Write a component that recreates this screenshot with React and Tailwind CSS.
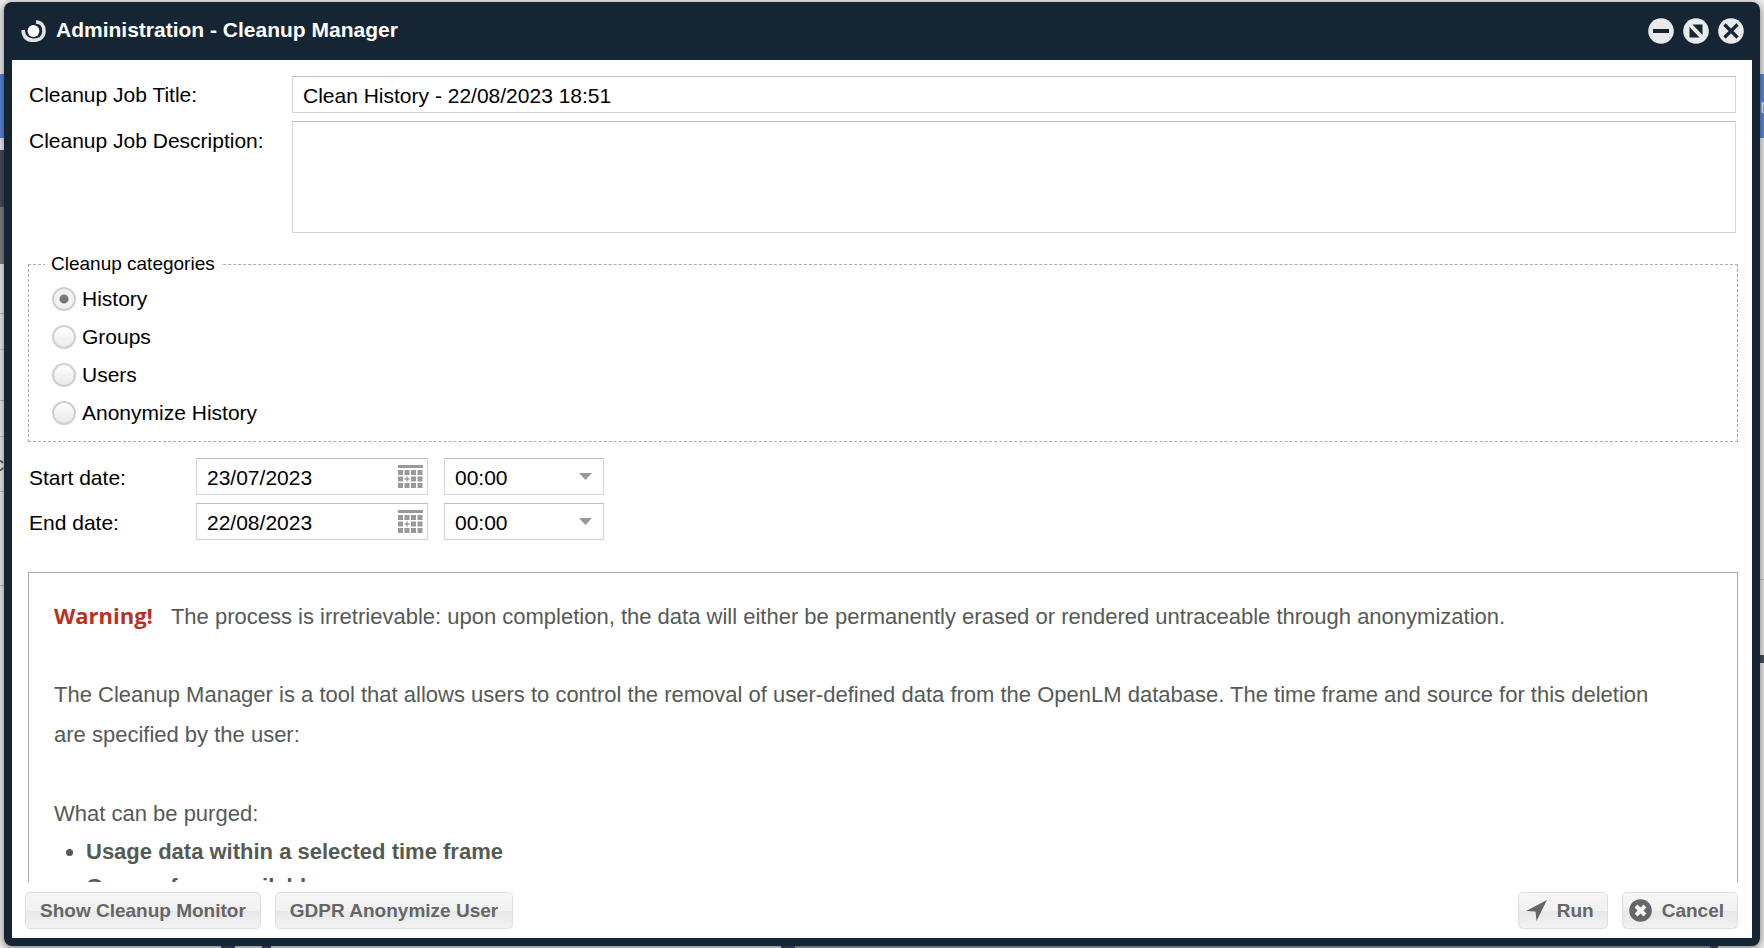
import { useState } from "react";

const categories = ["History", "Groups", "Users", "Anonymize History"];

const buttonStyle =
  "flex h-[37px] items-center rounded-[5px] border border-[#dedede] bg-[linear-gradient(#f6f6f6,#f1f1f1_50%,#e8e8e8_52%,#f2f2f2)] text-[19px] font-bold text-[#666]";

const fieldStyle =
  "border border-[#d5d5d5] border-t-[#bdbdbd] bg-white px-[10px] pt-[2px] text-[21px] leading-6 text-black outline-none";

function Backdrop() {
  return (
    <div
      className="absolute inset-0 flex flex-col justify-between overflow-hidden bg-[#ececec]"
      aria-hidden="true"
    >
      <div className="flex justify-between">
        <div className="w-2 pt-[74px]">
          <div className="h-16 bg-[#5b84dc]" />
          <div className="mt-3 h-[57px] bg-[#454c5a]" />
          <div className="h-[57px] bg-[#7d7f84]" />
          <div className="h-[50px] border-b border-[#bbb]" />
          <div className="h-9 border-b border-[#ccc]" />
          <div className="h-[51px] border-b border-[#bbb]" />
          <div className="h-9 border-b border-[#ccc]" />
          <div className="flex h-[55px] items-center justify-end overflow-hidden border-b border-[#bbb] pr-1 text-xl text-[#555]">
            c
          </div>
          <div className="h-[94px] border-b border-[#bbb]" />
        </div>
        <div className="w-1 pt-[74px]">
          <div className="flex h-16 items-center overflow-hidden bg-[#6285d3] text-xl text-[#e5e5e5]">
            n
          </div>
          <div className="h-[442px] border-b border-[#ccc]" />
          <div className="mt-[75px] h-2 bg-[#454c5a]" />
        </div>
      </div>
      <div className="flex h-[2px]">
        <div className="ml-[221px] w-[14px] bg-[#4a4b5c]" />
        <div className="ml-[27px] w-[9px] bg-[#4a4b5c]" />
        <div className="ml-[510px] w-[14px] bg-[#4a4b5c]" />
        <div className="flex-1 bg-[#a5a5a5]" />
        <div className="mr-[46px] w-2 bg-[#4a4b5c]" />
      </div>
    </div>
  );
}

function Logo() {
  return (
    <svg className="h-[23px] w-[25px]" viewBox="0 0 25 23" fill="none">
      <path
        d="M15 2C20 2 23 5.500 23 11c0 6-4.300 9.300-10.500 9.300C6.500 20.300 2.500 17 2 10"
        stroke="#dfe3e5"
        strokeWidth="3.600"
      />
      <circle cx="12.500" cy="11" r="5.900" fill="#fff" />
    </svg>
  );
}

function ToolButton({ label, children }) {
  return (
    <button aria-label={label} className="block">
      <svg className="h-[26px] w-[26px]" viewBox="0 0 26 26">
        <circle cx="13" cy="13" r="12.800" fill="#e8eaeb" />
        {children}
      </svg>
    </button>
  );
}

function CalendarIcon() {
  const cells = [];
  for (let row = 0; row < 3; row++) {
    for (let col = 0; col < 4; col++) {
      if (row === 1 && col === 1) continue;
      cells.push([col * 6.5, 5 + row * 6.5]);
    }
  }
  return (
    <svg className="h-[23px] w-[25px]" viewBox="0 0 25 23" fill="#999">
      <rect width="25" height="3" />
      {cells.map(([x, y]) => (
        <rect key={`${x}-${y}`} x={x} y={y} width="5" height="5" />
      ))}
      <path d="M8.300 11.500h1.400v1.800h1.800v1.400H9.700v1.800H8.300v-1.800H6.500v-1.400h1.800z" />
    </svg>
  );
}

function DateRow({ id, label, date }) {
  const [value, setValue] = useState(date);

  return (
    <div className="flex h-[37px] items-center">
      <label htmlFor={id} className="w-[167px] pt-[2px]">
        {label}
      </label>
      <div className="relative">
        <input
          id={id}
          value={value}
          onChange={(e) => setValue(e.target.value)}
          className={`${fieldStyle} block h-[37px] w-[232px]`}
        />
        <button
          aria-label={`Pick ${label}`}
          className="absolute top-[7px] right-[5px]"
        >
          <CalendarIcon />
        </button>
      </div>
      <div className="relative ml-4">
        <select
          aria-label={`${label} time`}
          className={`${fieldStyle} block h-[37px] w-40 appearance-none`}
        >
          <option>00:00</option>
        </select>
        <svg
          className="pointer-events-none absolute top-[15px] right-3 h-[7px] w-[13px]"
          viewBox="0 0 13 7"
          fill="#999"
        >
          <path d="M0 0h13L6.500 7z" />
        </svg>
      </div>
    </div>
  );
}

function App() {
  const [title, setTitle] = useState("Clean History - 22/08/2023 18:51");
  const [description, setDescription] = useState("");
  const [category, setCategory] = useState("History");

  return (
    <div className="relative h-screen px-1 py-[2px] font-['Liberation_Sans',Arial,sans-serif] text-[21px] leading-6 text-black">
      <Backdrop />
      <div className="relative flex h-full flex-col rounded-lg bg-[#162534] px-2 pb-2 shadow-[0_2px_8px_rgba(0,0,0,0.5)]">
        <header className="flex h-[58px] shrink-0 items-center pr-2 pl-[9px]">
          <Logo />
          <h1 className="ml-[10px] flex-1 pb-[2px] text-[21px] font-bold text-white">
            Administration - Cleanup Manager
          </h1>
          <div className="flex gap-[9px]">
            <ToolButton label="Minimize">
              <rect x="5" y="11" width="16" height="4" fill="#162534" />
            </ToolButton>
            <ToolButton label="Maximize">
              <path d="M9.500 6.500h10V17zM6.500 9v10.500h10z" fill="#162534" />
            </ToolButton>
            <ToolButton label="Close">
              <path
                d="M6.500 6.500l13 13M19.500 6.500l-13 13"
                stroke="#162534"
                strokeWidth="3.200"
              />
            </ToolButton>
          </div>
        </header>

        <main className="flex min-h-0 flex-1 flex-col bg-white pt-4">
          <div className="flex pr-4 pl-[17px]">
            <label htmlFor="title" className="w-[263px] shrink-0 pt-[7px]">
              Cleanup Job Title:
            </label>
            <input
              id="title"
              value={title}
              onChange={(e) => setTitle(e.target.value)}
              className={`${fieldStyle} h-[37px] min-w-0 flex-1`}
            />
          </div>
          <div className="mt-2 flex pr-4 pl-[17px]">
            <label
              htmlFor="description"
              className="w-[263px] shrink-0 pt-[8px]"
            >
              Cleanup Job Description:
            </label>
            <textarea
              id="description"
              value={description}
              onChange={(e) => setDescription(e.target.value)}
              className={`${fieldStyle} h-28 min-w-0 flex-1 resize-none`}
            />
          </div>

          <fieldset className="mr-[14px] ml-4 mt-5 border border-dashed border-[#aaa] px-4 pb-4">
            <legend className="px-[6px] text-[19px] leading-[22px]">
              Cleanup categories
            </legend>
            <div className="mt-3 flex flex-col gap-[14px] pl-[7px]">
              {categories.map((name) => (
                <label key={name} className="flex items-center gap-[6px]">
                  <input
                    type="radio"
                    name="category"
                    checked={category === name}
                    onChange={() => setCategory(name)}
                    className="h-6 w-6 appearance-none rounded-full border-2 border-[#cfcfcf] bg-[linear-gradient(#fff,#e9e9e9)] checked:bg-[radial-gradient(circle,#777_4px,#f2f2f2_5px)]"
                  />
                  {name}
                </label>
              ))}
            </div>
          </fieldset>

          <div className="mt-4 flex flex-col gap-2 pl-[17px]">
            <DateRow id="start" label="Start date:" date="23/07/2023" />
            <DateRow id="end" label="End date:" date="22/08/2023" />
          </div>

          <section className="mr-[14px] ml-4 mt-8 min-h-0 flex-1 overflow-hidden border border-b-0 border-[#aaa] pt-[22px] pr-16 pl-[25px] text-[22px] leading-10 text-[#555a55]">
            <p>
              <strong className="mr-[18px] font-['Open_Sans',sans-serif] text-[#b9311f]">
                Warning!
              </strong>
              The process is irretrievable: upon completion, the data will
              either be permanently erased or rendered untraceable through
              anonymization.
            </p>
            <p className="mt-[38px]">
              The Cleanup Manager is a tool that allows users to control the
              removal of user-defined data from the OpenLM database. The time
              frame and source for this deletion are specified by the user:
            </p>
            <p className="mt-[39px]">What can be purged:</p>
            <ul className="list-disc pl-8 leading-[35px] font-bold">
              <li>Usage data within a selected time frame</li>
              <li>Groups from available</li>
            </ul>
          </section>

          <footer className="mt-[10px] mr-[14px] mb-[9px] ml-[13px] flex shrink-0 gap-[14px]">
            <button className={`${buttonStyle} px-[14px]`}>
              Show Cleanup Monitor
            </button>
            <button className={`${buttonStyle} mr-auto px-[14px]`}>
              GDPR Anonymize User
            </button>
            <button className={`${buttonStyle} gap-[10px] pr-[13px] pl-[7px]`}>
              <svg
                className="h-[21px] w-[21px]"
                viewBox="0 0 21 21"
                fill="#666"
              >
                <path d="M21 0L10.500 21 9.500 11.500 0 11z" />
              </svg>
              Run
            </button>
            <button className={`${buttonStyle} gap-[10px] pr-[13px] pl-[6px]`}>
              <svg className="h-[23px] w-[23px]" viewBox="0 0 23 23">
                <circle cx="11.500" cy="11.500" r="11.300" fill="#666" />
                <path
                  d="M7 7l9 9M16 7l-9 9"
                  stroke="#f6f6f6"
                  strokeWidth="4"
                />
              </svg>
              Cancel
            </button>
          </footer>
        </main>
      </div>
    </div>
  );
}

export default App;
